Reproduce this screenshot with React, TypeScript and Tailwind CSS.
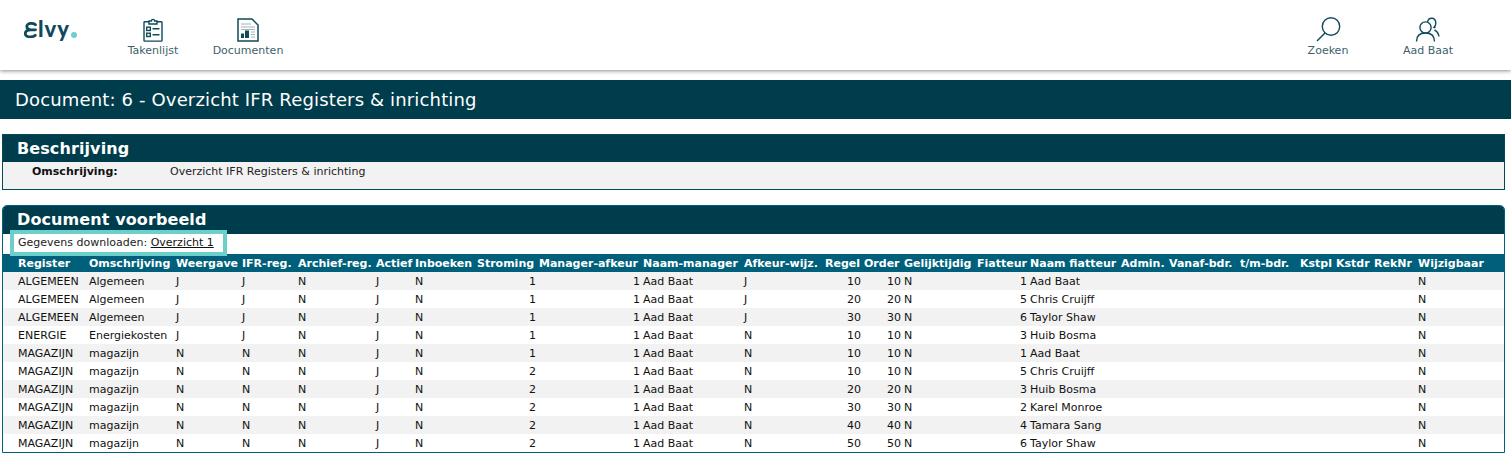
const rows = [
  ["ALGEMEEN","Algemeen","J","J","N","J","N","1","1","Aad Baat","J","10","10","N","1","Aad Baat","N"],
  ["ALGEMEEN","Algemeen","J","J","N","J","N","1","1","Aad Baat","J","20","20","N","5","Chris Cruijff","N"],
  ["ALGEMEEN","Algemeen","J","J","N","J","N","1","1","Aad Baat","J","30","30","N","6","Taylor Shaw","N"],
  ["ENERGIE","Energiekosten","J","J","N","J","N","1","1","Aad Baat","N","10","10","N","3","Huib Bosma","N"],
  ["MAGAZIJN","magazijn","N","N","N","J","N","1","1","Aad Baat","N","10","10","N","1","Aad Baat","N"],
  ["MAGAZIJN","magazijn","N","N","N","J","N","2","1","Aad Baat","N","10","10","N","5","Chris Cruijff","N"],
  ["MAGAZIJN","magazijn","N","N","N","J","N","2","1","Aad Baat","N","20","20","N","3","Huib Bosma","N"],
  ["MAGAZIJN","magazijn","N","N","N","J","N","2","1","Aad Baat","N","30","30","N","2","Karel Monroe","N"],
  ["MAGAZIJN","magazijn","N","N","N","J","N","2","1","Aad Baat","N","40","40","N","4","Tamara Sang","N"],
  ["MAGAZIJN","magazijn","N","N","N","J","N","2","1","Aad Baat","N","50","50","N","6","Taylor Shaw","N"],
];

const cols: { label: string; w: string; right?: boolean }[] = [
  { label: "Register", w: "w-[71px]" },
  { label: "Omschrijving", w: "w-[87px]" },
  { label: "Weergave", w: "w-[66px]" },
  { label: "IFR-reg.", w: "w-[56px]" },
  { label: "Archief-reg.", w: "w-[78px]" },
  { label: "Actief", w: "w-[39px]" },
  { label: "Inboeken", w: "w-[62px]" },
  { label: "Stroming", w: "w-[62px]", right: true },
  { label: "Manager-afkeur", w: "w-[104px]", right: true },
  { label: "Naam-manager", w: "w-[101px]" },
  { label: "Afkeur-wijz.", w: "w-[81px]" },
  { label: "Regel", w: "w-[39px]", right: true },
  { label: "Order", w: "w-[40px]", right: true },
  { label: "Gelijktijdig", w: "w-[73px]" },
  { label: "Fiatteur", w: "w-[53px]", right: true },
  { label: "Naam fiatteur", w: "w-[91px]" },
];
const tail = [
  { label: "Admin.", w: "w-[48px]" },
  { label: "Vanaf-bdr.", w: "w-[71px]" },
  { label: "t/m-bdr.", w: "w-[60px]" },
  { label: "Kstpl", w: "w-[36px]" },
  { label: "Kstdr", w: "w-[38px]" },
  { label: "RekNr", w: "w-[44px]" },
];

function LogoMark() {
  return (
    <svg width="13" height="16" viewBox="0 0 13 16" fill="none" stroke="#0f4a5c" strokeWidth="2.800" strokeLinecap="round">
      <path d="M11.500 2.800C10.500 1.800 8.800 1.300 7 1.300 4.500 1.300 2.800 2.700 2.800 4.600c0 1.900 1.700 3.200 3.900 3.200h4.800M6.700 7.800c-3.100 0-5.400 1.300-5.400 3.600 0 2.200 2.300 3.400 5 3.400 2 0 3.900-.5 5-1.600" />
    </svg>
  );
}
function Clipboard() {
  return (
    <svg width="20" height="24" viewBox="0 0 20 24" fill="none" stroke="#0f4a5c" strokeWidth="1.400">
      <path d="M6 3.700H1.700a.7.700 0 0 0-.7.7v18a.7.700 0 0 0 .7.7h16.600a.7.700 0 0 0 .7-.7v-18a.7.700 0 0 0-.7-.7H14" />
      <path d="M6 6V3h2.400a1.600 1.600 0 0 1 3.200 0H14v3z" />
      <rect x="3.700" y="9.200" width="3.600" height="3.300" />
      <rect x="3.700" y="15.200" width="3.600" height="3.300" />
      <path d="M9.500 10.800h7M9.500 16.800h7" />
    </svg>
  );
}
function Doc() {
  return (
    <svg width="22" height="24" viewBox="0 0 22 24" fill="none">
      <path d="M1 1h14l6 6v16H1z" stroke="#0f4a5c" strokeWidth="1.500" />
      <path d="M4 6h10M4 9h14M4 11.500h14M14 14h4M14 16.500h4M14 19h4" stroke="#9fb4bb" strokeWidth="1" />
      <path d="M4 15.500h3V20H4zM8 12.500h4V20H8z" fill="#0f4a5c" />
    </svg>
  );
}
function Search() {
  return (
    <svg width="26" height="25" viewBox="0 0 26 25" fill="none" stroke="#0f4a5c" strokeWidth="1.400">
      <circle cx="16" cy="9.500" r="8.700" />
      <path d="M10 16 2 24" />
    </svg>
  );
}
function Users() {
  return (
    <svg width="26" height="25" viewBox="0 0 26 25" fill="none" stroke="#0f4a5c" strokeWidth="1.400">
      <circle cx="10.500" cy="10.500" r="5.600" />
      <path d="M1.500 24.500c0-5.500 3.500-8.500 9-8.500s9 3 9 8.500" />
      <path d="M12.500 5c.5-2.300 2-3.800 4-3.800 2.800 0 4.300 2.200 4.300 5 0 1.800-.6 3.200-1.800 4.200 0 0 .8.200 1.500.6M19.500 13c2.500 1.200 4 3.500 4.500 6.500" />
    </svg>
  );
}

function NavItem({ icon, label, className }: { icon: React.ReactNode; label: string; className: string }) {
  return (
    <div className={`flex flex-col items-center ${className}`}>
      <div className="h-[25px] flex items-end justify-center">{icon}</div>
      <span className="mt-[1px] text-[11px] leading-[16px] text-[#3d5f6c] whitespace-nowrap">{label}</span>
    </div>
  );
}

const td = "h-[18px] p-0 pt-[2px] pl-[1px] align-top leading-[16px] whitespace-nowrap";

export default function App() {
  return (
    <div className="min-h-[459px] bg-white text-[11px] text-[#111] font-['Verdana','DejaVu_Sans',sans-serif] overflow-hidden">
      <header className="h-[70px] flex items-start justify-between bg-white shadow-[0_1px_4px_rgba(0,0,0,0.45)] pt-[17px]">
        <div className="flex items-start">
          <div className="ml-[24px] w-[82px] flex items-end h-[24px] text-[#0f4a5c]">
            <span className="mb-[3px] mr-[1px] flex"><LogoMark /></span>
            <span className="font-['Lato',sans-serif] font-black text-[22px] leading-[24px] tracking-[1px]">lvy</span>
            <span className="mb-[3px] ml-[1px] w-[6px] h-[6px] rounded-full bg-[#6ccfc9]" />
          </div>
          <NavItem icon={<Clipboard />} label="Takenlijst" className="w-[94px]" />
          <NavItem icon={<Doc />} label="Documenten" className="w-[96px]" />
        </div>
        <div className="flex items-start pr-[33px]">
          <NavItem icon={<Search />} label="Zoeken" className="w-[100px]" />
          <NavItem icon={<Users />} label="Aad Baat" className="w-[100px]" />
        </div>
      </header>

      <div className="mt-[10px] h-[39px] bg-[#003d4c] flex items-center pl-[15px] text-white text-[18px] tracking-[0.15px]">
        Document: 6 - Overzicht IFR Registers &amp; inrichting
      </div>

      <section className="mt-[15px] mx-[2px] mr-[6px] h-[56px] border border-[#004a5e] bg-[#f2f2f2]">
        <h2 className="h-[27px] bg-[#003d4c] text-white font-bold text-[16px] leading-[27px] pl-[14px] tracking-[0.1px]">Beschrijving</h2>
        <div className="flex pt-[3px] leading-[14px]">
          <span className="w-[167px] pl-[29px] font-bold">Omschrijving:</span>
          <span className="text-[#222]">Overzicht IFR Registers &amp; inrichting</span>
        </div>
      </section>

      <section className="mt-[15px] mx-[2px] mr-[6px] border border-[#005f7a] rounded-t-[5px] overflow-hidden bg-white">
        <h2 className="h-[28px] bg-[#003d4c] text-white font-bold text-[16px] leading-[27px] pl-[14px] tracking-[0.1px]">Document voorbeeld</h2>
        <div className="h-[20px] relative">
          <div className="absolute left-[7px] top-[-4px] h-[26px] w-[217px] border-[4px] border-[#6ccfc9] flex items-center pl-[4px] whitespace-nowrap text-[#222]">
            Gegevens downloaden:&nbsp;<a className="underline text-[#111]">Overzicht 1</a>
          </div>
        </div>
        <table className="w-full table-fixed border-collapse">
          <thead>
            <tr className="h-[18px] bg-[#005f7a] text-white font-bold">
              <th className="w-[14px] p-0" />
              {cols.map((c) => (
                <th key={c.label} className={`${c.w} p-0 pt-[2px] pl-[1px] align-top leading-[16px] text-left font-bold whitespace-nowrap`}>{c.label}</th>
              ))}
              {tail.map((c) => (
                <th key={c.label} className={`${c.w} p-0 pt-[2px] pl-[1px] align-top leading-[16px] text-left font-bold whitespace-nowrap`}>{c.label}</th>
              ))}
              <th className="p-0 pt-[2px] pl-[1px] align-top leading-[16px] text-left font-bold whitespace-nowrap">Wijzigbaar</th>
            </tr>
          </thead>
          <tbody>
            {rows.map((r, i) => (
              <tr key={i} className={i % 2 === 0 ? "bg-[#f2f2f2]" : "bg-white"}>
                <td className="p-0" />
                {cols.map((c, j) => (
                  <td key={j} className={`${td} ${c.right ? "text-right pr-[2px]" : ""}`}>{r[j]}</td>
                ))}
                {tail.map((c) => (
                  <td key={c.label} className={td} />
                ))}
                <td className={td}>{r[16]}</td>
              </tr>
            ))}
          </tbody>
        </table>
      </section>
    </div>
  );
}
